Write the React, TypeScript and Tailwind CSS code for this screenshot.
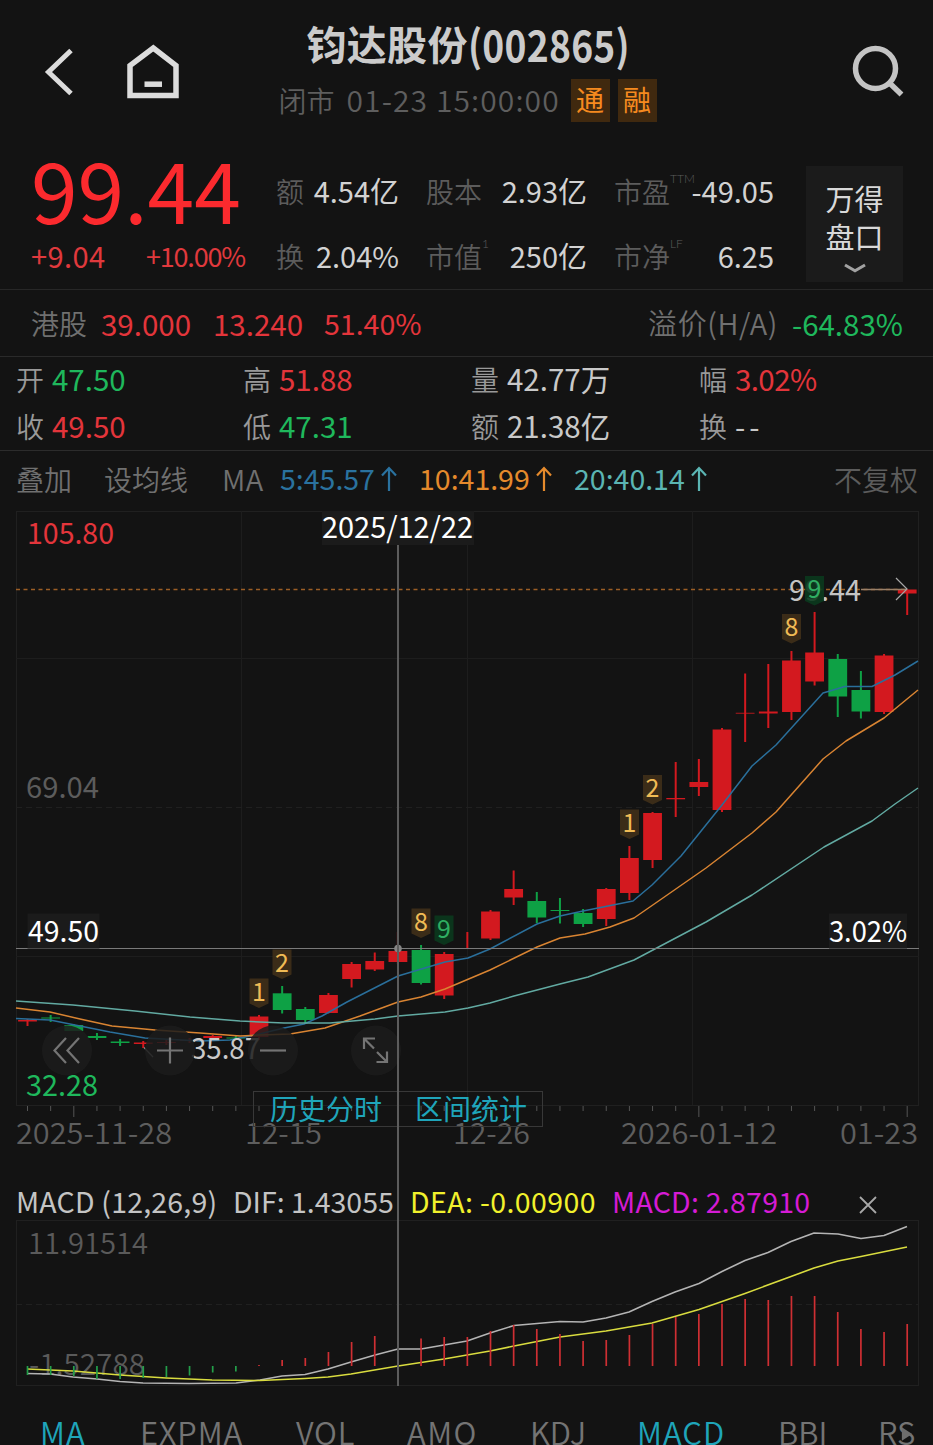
import type { ReactNode } from "react";

const UP = "#d3191f";
const DOWN = "#0ea145";

type Candle = {
  open: number;
  close: number;
  high: number;
  low: number;
  up: boolean;
};

const c = (open: number, close: number, high: number, low: number, up = true): Candle => ({
  open,
  close,
  high,
  low,
  up,
});

const STEP = 23.15;
const xAt = (i: number) => 27.5 + i * STEP;

// body top, body bottom, wick top, wick bottom
const CANDLES: Candle[] = [
  c(1020, 1021.5, 1019, 1026),
  c(1017.5, 1018.5, 1015, 1022, false),
  c(1025, 1031, 1024, 1031, false),
  c(1036, 1038, 1033, 1040, false),
  c(1041.5, 1043, 1039, 1046, false),
  c(1042.5, 1044, 1041, 1048),
  c(1042, 1043, 1040, 1045),
  c(1040, 1041, 1038, 1043),
  c(1036, 1038, 1035, 1040),
  c(1037.5, 1038.5, 1036, 1040, false),
  c(1016.5, 1037, 1015, 1040),
  c(993.3, 1010, 986, 1013.5, false),
  c(1009, 1020, 1007, 1023, false),
  c(995, 1013, 993, 1013.5),
  c(964, 979, 962, 987.5),
  c(961, 969.5, 952.5, 971),
  c(951, 962, 932, 964),
  c(950, 983, 945, 984.5, false),
  c(954, 995.5, 952, 999),
  c(948, 949, 932, 949),
  c(911.5, 938.5, 910, 940),
  c(889, 897.5, 870.5, 905),
  c(901, 917.5, 892, 923, false),
  c(910, 911, 898, 923.5, false),
  c(913, 924, 909, 927, false),
  c(889, 919, 888, 926),
  c(858, 893, 846, 900),
  c(813, 860, 812, 868),
  c(798, 799.3, 762, 817),
  c(782, 787, 759, 796),
  c(729.5, 810, 728, 812),
  c(712.8, 713.6, 673.5, 742),
  c(711.5, 713.5, 664, 728),
  c(660.5, 712, 651, 720),
  c(652.5, 681.5, 612, 685.5),
  c(659, 696.5, 654, 717, false),
  c(690, 711.5, 671, 718.5, false),
  c(655.5, 712, 654, 714),
  c(589.5, 593.5, 589.5, 615),
];

const MA5 =
  "16,1018.5 50,1020 80,1026 110,1032 145,1038 200,1041 230,1040 255,1035 284,1028 304,1024 322,1016 347,1002 398,976 445,962 468,958 490,949 537,924 560,916 583,911 633,901 652,885 681,856 722,805 752,766 776,745 823,693 845,686.5 872,686.5 895,675 918,661";
const MA10 =
  "16,1008 50,1012 80,1019 112,1026 155,1030 200,1033 240,1036 260,1035 290,1034 325,1028 360,1016 398,1002 421,997 445,989 490,970 537,947 560,938 585,934 610,927 634,918 660,900 706,868 752,833 776,812 823,759 846,741 884,718 918,690";
const MA20 =
  "16,1001 73,1005 135,1011 190,1017 240,1021 284,1023 330,1023 375,1019 398,1016 445,1012 468,1008 490,1003 514,996 560,984 588,977 634,960 706,922 752,895 824,847 872,821 895,804 918,788";

const MARKERS = [
  { x: 259, y: 978.5, n: "1" },
  { x: 282, y: 949.5, n: "2" },
  { x: 421, y: 908.5, n: "8" },
  { x: 444, y: 915.5, n: "9" },
  { x: 629.5, y: 809.5, n: "1" },
  { x: 652.5, y: 775, n: "2" },
  { x: 791.5, y: 614, n: "8" },
  { x: 814.5, y: 576, n: "9" },
];

const MACD_BASE = 1366;
const MACD_BARS = [
  1375, 1375, 1376, 1379, 1379, 1378, 1377, 1375.5, 1372.5, 1371.5, 1365, 1360, 1358, 1352, 1342,
  1336, 1332, 1338.5, 1337, 1337, 1331, 1325, 1329, 1334, 1341, 1340, 1335, 1324, 1317, 1314, 1304,
  1299, 1300, 1296, 1296, 1312, 1329, 1332, 1324,
];
const DIF =
  "27,1373.5 50,1374 73,1377 97,1379 120,1381.5 143,1383 189,1383.5 236,1383 260,1380 282,1376 305,1374.5 328,1369 351,1362 375,1355 398,1349 421,1349 444,1345 467,1341 490,1333 514,1325.5 560,1321.5 583,1322 606,1318 629,1312 652,1301.5 675,1292 699,1283.5 722,1271.5 745,1260.5 768,1252.5 791,1241.5 814,1233 838,1234 861,1238.5 884,1235.5 907,1226.5";
const DEA =
  "27,1369 73,1371 120,1375 166,1378 212,1380 260,1380.5 305,1378.5 328,1377 351,1374 398,1366 444,1359 490,1351 514,1346 537,1341.5 560,1337 606,1331 652,1323 699,1309.5 745,1293.5 791,1276.5 814,1268 838,1261 861,1256.5 907,1247";

function Label({
  x,
  y,
  w,
  fill,
  children,
}: {
  x: number;
  y: number;
  w: number;
  fill: string;
  children: string;
}) {
  return (
    <text x={x} y={y} textLength={w} lengthAdjust="spacingAndGlyphs" fontSize="29" fill={fill}>
      {children}
    </text>
  );
}

function Header() {
  return (
    <header className="flex h-[150px] justify-between pl-11 pr-7">
      <div className="flex w-[227px] gap-[53px] pt-11">
        <svg width="29" height="56" viewBox="44 44 29 56" fill="none" stroke="#dcdcdc" strokeWidth="5">
          <path d="M71 50.5 48.5 72 71 93.5" />
        </svg>
        <svg width="54" height="56" viewBox="126 44 54 56" fill="none" stroke="#dcdcdc" strokeWidth="5.5">
          <path d="M130 95.5V65.5L153.3 48 176 65.5V95.5Z" />
          <path d="M144.5 84.2H162" />
        </svg>
      </div>
      <div className="flex w-[400px] flex-col">
        <h1 className="ml-8 mt-[15px] flex h-14 items-center whitespace-nowrap text-[40px] font-bold leading-[56px] tracking-[0.3px] text-[#cbcbcb]">
          钧达股份
          <span className="inline-block w-[158px] origin-left scale-x-[0.865] text-[43px]">(002865)</span>
        </h1>
        <div className="ml-1 mt-2 flex h-[43px] items-center whitespace-nowrap text-[29px] font-[350] text-[#5e5e5e]">
          <span className="-mt-[2px] text-[28px]">闭市</span>
          <span className="-mt-[3px] ml-[12px] w-[224px] text-[30px] tracking-[1.1px]">01-23 15:00:00</span>
          <span className="flex h-[43px] w-[39px] items-center justify-center bg-[#40290f] text-[28px] font-normal leading-[42px] text-[#f58a1f]">
            <span className="-mt-[3px]">通</span>
          </span>
          <span className="ml-2 flex h-[43px] w-[39px] items-center justify-center bg-[#40290f] text-[28px] font-normal leading-[42px] text-[#f58a1f]">
            <span className="-mt-[3px]">融</span>
          </span>
        </div>
      </div>
      <div className="flex w-[227px] justify-end pt-11">
        <svg width="54" height="56" viewBox="851 44 54 56" fill="none" stroke="#c4c4c4" strokeWidth="5.5">
          <circle cx="875.5" cy="68.5" r="20" />
          <path d="M889.5 83 901.5 94.5" />
        </svg>
      </div>
    </header>
  );
}

function Stat({ label, sup, value, className }: { label: string; sup?: string; value: string; className: string }) {
  return (
    <div className={`flex items-center justify-between whitespace-nowrap ${className}`}>
      <span className="relative text-[28px] font-[350] text-[#5c5c5c]">
        {label}
        {sup && <sup className="absolute left-full top-[3px] font-[Lato] text-[12px] leading-none">{sup}</sup>}
      </span>
      <span className="text-[29px] text-[#d2d2d2]">{value}</span>
    </div>
  );
}

function Quote() {
  return (
    <section className="flex h-[140px] border-b border-[#272727]">
      <div className="w-[276px] pl-[31px]">
        <div className="h-[86px] text-[84px] leading-[75px] text-[#fb2a2e]">99.44</div>
        <div className="-mt-px flex h-[42px] items-center whitespace-nowrap text-[29px] text-[#e0393d]">
          <span className="w-[115px] tracking-[0.4px]">+9.04</span>
          <span className="text-[27px] tracking-[-1.2px]">+10.00%</span>
        </div>
      </div>
      <div className="flex flex-col gap-[23px] pt-5">
        <div className="flex h-[42px]">
          <Stat className="w-[123px]" label="额" value="4.54亿" />
          <Stat className="ml-[27px] w-[161px]" label="股本" value="2.93亿" />
          <Stat className="ml-[27px] w-[160px]" label="市盈" sup="TTM" value="-49.05" />
        </div>
        <div className="flex h-[42px]">
          <Stat className="w-[123px]" label="换" value="2.04%" />
          <Stat className="ml-[27px] w-[161px]" label="市值" sup="1" value="250亿" />
          <Stat className="ml-[27px] w-[160px]" label="市净" sup="LF" value="6.25" />
        </div>
      </div>
      <button className="ml-8 mt-4 flex h-[116px] w-[97px] flex-col items-center bg-[#1b1b1b] pt-[13px] text-[29px] leading-[38px] text-[#d9d9d9]">
        万得
        <br />
        盘口
        <svg className="mt-[8px]" width="24" height="12" viewBox="0 0 24 12" fill="none" stroke="#a2a2a2" strokeWidth="3">
          <path d="M2 2 12 7.8 22 2" />
        </svg>
      </button>
    </section>
  );
}

function HkRow() {
  return (
    <section className="flex h-[67px] items-center justify-between whitespace-nowrap border-b border-[#2a2a2a] pl-[31px] pr-[30px] text-[29.5px] text-[#e3353b]">
      <div className="flex items-center">
        <span className="w-[70px] text-[28px] font-[350] text-[#707070]">港股</span>
        <span className="w-[112px]">39.000</span>
        <span className="w-[111px]">13.240</span>
        <span className="text-[28.5px]">51.40%</span>
      </div>
      <div className="flex items-center gap-[14px]">
        <span className="text-[29px] font-[350] tracking-[0.6px] text-[#707070]">溢价(H/A)</span>
        <span className="text-[29.5px] text-[#1fb85c]">-64.83%</span>
      </div>
    </section>
  );
}

const OHLC = [
  { label: "开", value: "47.50", color: "text-[#1fb85c]" },
  { label: "高", value: "51.88", color: "text-[#e3353b]" },
  { label: "量", value: "42.77万", color: "text-[#c9c9c9]" },
  { label: "幅", value: "3.02%", color: "text-[#e3353b] tracking-[-0.6px]" },
  { label: "收", value: "49.50", color: "text-[#e3353b]" },
  { label: "低", value: "47.31", color: "text-[#1fb85c]" },
  { label: "额", value: "21.38亿", color: "text-[#c9c9c9]" },
  { label: "换", value: "--", color: "text-[#c9c9c9] tracking-[4px]" },
];

function OhlcGrid() {
  return (
    <section className="grid h-[94px] grid-cols-[227px_228px_228px_1fr] grid-rows-[47px_47px] border-b border-[#2c2c2c] pl-4">
      {OHLC.map((item) => (
        <div key={item.label} className="flex items-center whitespace-nowrap pb-1 text-[29.5px]">
          <span className="w-9 text-[28px] font-[350] text-[#999999]">{item.label}</span>
          <span className={item.color}>{item.value}</span>
        </div>
      ))}
    </section>
  );
}

function Arrow() {
  return (
    <svg width="18" height="26" viewBox="0 0 18 26" fill="none" stroke="currentColor" strokeWidth="2.2">
      <path d="M9 25V2M2 9.5 9 2 16 9.5" />
    </svg>
  );
}

function Ma({ className, children }: { className: string; children: ReactNode }) {
  return (
    <span className={`flex items-center justify-between whitespace-nowrap ${className}`}>
      {children}
      <Arrow />
    </span>
  );
}

function MaRow() {
  return (
    <section className="flex h-[49px] items-center whitespace-nowrap px-4 pt-[6px] text-[28px] font-[350] text-[#707070]">
      <span className="w-[88px]">叠加</span>
      <span className="w-[118px]">设均线</span>
      <span className="w-[58px] text-[29px] tracking-[0.5px]">MA</span>
      <Ma className="w-[118px] text-[28.5px] font-normal text-[#2a729f]">5:45.57</Ma>
      <Ma className="ml-[21px] w-[134px] text-[28.5px] font-normal text-[#e58a2c]">10:41.99</Ma>
      <Ma className="ml-[21px] w-[134px] text-[28.5px] font-normal text-[#5bb5b3]">20:40.14</Ma>
      <span className="-mr-px ml-auto text-[#5c5c5c]">不复权</span>
    </section>
  );
}

function Marker({ x, y, n }: { x: number; y: number; n: string }) {
  const done = n === "9";
  return (
    <g>
      <path
        d={`M${x - 9.5} ${y}h19v25l-9.5 4.5-9.5-4.5z`}
        fill={done ? "#0b3a1e" : "#40301a"}
        fillOpacity="0.9"
      />
      <text x={x} y={y + 22} textAnchor="middle" fontSize="25" fill={done ? "#2fae62" : "#f0bb55"}>
        {n}
      </text>
    </g>
  );
}

function KLineChart() {
  return (
    <svg className="block" width="933" height="650" viewBox="0 500 933 650" fill="none">
      {/* grid */}
      <g stroke="#202020">
        <rect x="16.5" y="511.5" width="902" height="594" />
        <path d="M241.5 511V1105M467.5 511V1105M692.5 511V1105M16 658.5H919M16 956.5H919" stroke="#1d1d1d" />
        <path d="M16 807.5H919" strokeDasharray="6 4" />
      </g>
      {CANDLES.map((_, i) => (
        <path
          key={i}
          d={`M${xAt(i)} 1106v${[2, 11, 20, 29, 38].includes(i) ? 11 : 5}`}
          stroke="#555555"
        />
      ))}

      <path d="M16 589.5H907" stroke="#9c5e25" strokeWidth="1.3" strokeDasharray="4 3.5" />

      {/* candles */}
      {CANDLES.map((k, i) => (
        <g key={i} fill={k.up ? UP : DOWN} stroke={k.up ? UP : DOWN}>
          <path d={`M${xAt(i)} ${k.high}V${k.low}`} strokeWidth="2" />
          <rect x={xAt(i) - 9.4} y={k.open} width="18.8" height={k.close - k.open} stroke="none" />
        </g>
      ))}

      <g strokeWidth="1.5" strokeLinejoin="round">
        <polyline points={MA5} stroke="#2a6f9b" />
        <polyline points={MA10} stroke="#d98432" />
        <polyline points={MA20} stroke="#62aaa2" />
      </g>

      {/* high and low callouts */}
      <path d="M861 589.5H906" stroke="#9a8068" strokeWidth="1.3" />
      <path d="M896 578 907 589 896 600" stroke="#a8a8a8" strokeWidth="1.2" />
      <Label x={789} y={601} w={72} fill="#c4c4c4">99.44</Label>
      <path d="M153 1057 144 1047.5" stroke="#8b8b8b" strokeWidth="1.2" />
      <Label x={191} y={1059} w={69} fill="#c9c9c9">35.87</Label>

      {MARKERS.map((m) => (
        <Marker key={m.x} {...m} />
      ))}

      {/* price axis */}
      <Label x={27} y={544} w={87} fill="#e3353b">105.80</Label>
      <Label x={26} y={798} w={73} fill="#5c5c5c">69.04</Label>
      <Label x={26} y={1096} w={72} fill="#1fb85c">32.28</Label>

      {/* chart controls */}
      <g fill="#1c1c1c" fillOpacity="0.85">
        <circle cx="67" cy="1050.5" r="25" />
        <circle cx="170" cy="1050.5" r="25" />
        <circle cx="273" cy="1050.5" r="25" />
        <circle cx="376" cy="1050.5" r="25" />
      </g>
      <g stroke="#747474" strokeWidth="2.2">
        <path d="M66 1038 54.5 1050.5 66 1063M79 1038 67.5 1050.5 79 1063" />
        <path d="M157 1050.5H183M170 1037.5V1063.5" />
        <path d="M260 1050.5H286" />
        <path d="M364 1049V1038.5H375M364 1038.5 374 1048.5M387 1051.5V1062H376.5M387 1062 377 1052" />
      </g>

      {/* crosshair */}
      <path d="M16 948.5H919" stroke="#7a7a7a" strokeWidth="1.2" />
      <circle cx="398" cy="948.5" r="3.8" fill="#858585" />
      <g fill="#1b1b1b">
        <rect x="27.5" y="913.5" width="72" height="35" />
        <rect x="829" y="913.5" width="78" height="35" />
        <rect x="322" y="511" width="152" height="34" />
      </g>
      <Label x={28} y={942} w={71} fill="#ffffff">49.50</Label>
      <Label x={829} y={942} w={78} fill="#ffffff">3.02%</Label>
      <Label x={322} y={538} w={151} fill="#ffffff">2025/12/22</Label>

      {/* time axis */}
      <g fontWeight="350">
        <Label x={16} y={1144} w={156} fill="#5e5e5e">2025-11-28</Label>
        <Label x={245} y={1144} w={77} fill="#5e5e5e">12-15</Label>
        <Label x={453} y={1144} w={77} fill="#5e5e5e">12-26</Label>
        <Label x={621} y={1144} w={156} fill="#5e5e5e">2026-01-12</Label>
        <Label x={840} y={1144} w={78} fill="#5e5e5e">01-23</Label>
      </g>

      <rect x="253.5" y="1091.5" width="289" height="35" stroke="#383838" />
      <g fontSize="28" fill="#1fa5ba">
        <text x="270" y="1119.5">历史分时</text>
        <text x="415" y="1119.5">区间统计</text>
      </g>
    </svg>
  );
}

function MacdHeader() {
  return (
    <div className="flex h-[65px] items-center whitespace-nowrap pl-4 pt-[37px] text-[28.5px] text-[#c4c4c4]">
      <span className="w-[217px] tracking-[0.2px]">MACD (12,26,9)</span>
      <span className="w-[177px]">DIF: 1.43055</span>
      <span className="w-[202px] tracking-[0.4px] text-[#f1f12c]">DEA: -0.00900</span>
      <span className="w-[247px] tracking-[0.25px] text-[#d51bd5]">MACD: 2.87910</span>
      <svg className="mt-2" width="18" height="18" viewBox="0 0 18 18" fill="none" stroke="#a8a8a8" strokeWidth="1.8">
        <path d="M1 1 17 17M17 1 1 17" />
      </svg>
    </div>
  );
}

function MacdChart() {
  return (
    <svg className="block" width="933" height="180" viewBox="0 1215 933 180" fill="none">
      <rect x="16.5" y="1220.5" width="902" height="165" stroke="#202020" />
      <path d="M16 1304.5H919" stroke="#202020" strokeDasharray="6 4" />
      <g fontWeight="350">
        <Label x={28} y={1254} w={120} fill="#5a5a5a">11.91514</Label>
        <Label x={29} y={1375} w={116} fill="#5a5a5a">-1.52788</Label>
      </g>
      <g strokeWidth="1.6" strokeLinejoin="round">
        <polyline points={DIF} stroke="#b4b4b4" />
        <polyline points={DEA} stroke="#d9dc3f" />
      </g>
      {MACD_BARS.map((y, i) => (
        <path
          key={i}
          d={`M${xAt(i)} ${MACD_BASE}V${y}`}
          stroke={y > MACD_BASE ? "#23a04a" : "#cf2f33"}
          strokeWidth="1.7"
        />
      ))}
    </svg>
  );
}

function Tabs() {
  return (
    <nav className="flex h-[50px] items-start whitespace-nowrap pl-[40px] pt-[14px] text-[31px] font-[350] leading-[46px] text-[#747474]">
      <span className="w-[100px] tracking-[1px] text-[#1fa5ba]">MA</span>
      <span className="w-[156px] tracking-[0.9px]">EXPMA</span>
      <span className="w-[111px] tracking-[0.8px]">VOL</span>
      <span className="w-[123px] tracking-[1.5px]">AMO</span>
      <span className="w-[107px]">KDJ</span>
      <span className="w-[141px] tracking-[1px] text-[#1fa5ba]">MACD</span>
      <span className="w-[100px]">BBI</span>
      <span className="relative">
        RS
        <svg className="absolute left-[23px] top-[16px]" width="12" height="18" viewBox="0 0 14 18" fill="#6d6d6d">
          <path d="M1 1 13 9 1 17z" />
        </svg>
      </span>
    </nav>
  );
}

export default function App() {
  return (
    <main className="h-[1445px] w-[933px] overflow-hidden bg-[#131313] font-['Noto_Sans_CJK_SC',sans-serif]">
      <Header />
      <Quote />
      <HkRow />
      <OhlcGrid />
      <MaRow />
      <div className="relative">
        <KLineChart />
        <MacdHeader />
        <MacdChart />
        <div className="absolute left-[397px] top-[45px] h-[841px] w-[1.5px] bg-[#5c5c5c]" />
      </div>
      <Tabs />
    </main>
  );
}
